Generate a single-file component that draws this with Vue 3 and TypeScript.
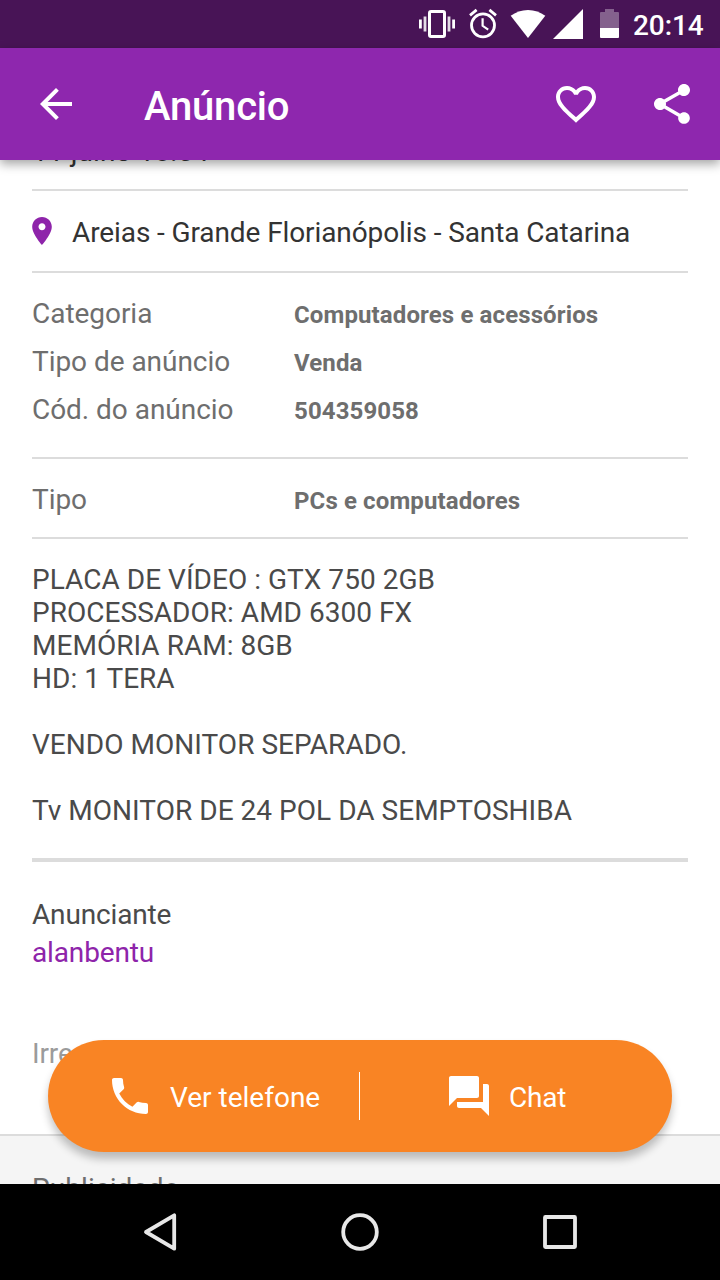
<script setup lang="ts">
interface Detail {
  label: string
  value: string
}

const details: Detail[] = [
  { label: 'Categoria', value: 'Computadores e acessórios' },
  { label: 'Tipo de anúncio', value: 'Venda' },
  { label: 'Cód. do anúncio', value: '504359058' },
]

const description: string = [
  'PLACA DE VÍDEO : GTX 750 2GB',
  'PROCESSADOR: AMD 6300 FX',
  'MEMÓRIA RAM: 8GB',
  'HD: 1 TERA',
  '',
  'VENDO MONITOR SEPARADO.',
  '',
  'Tv MONITOR DE 24 POL DA SEMPTOSHIBA',
].join('\n')
</script>

<template>
  <div class="screen">
    <div class="status-bar">
      <svg class="vibrate" width="36" height="48" viewBox="0 0 36 48">
        <rect x="10.5" y="11.5" width="15" height="25" rx="1.5" fill="none" stroke="#fff" stroke-width="3" />
        <path d="M1.4 19.5v9M34.6 19.5v9" stroke="#fff" stroke-width="2.8" />
        <path d="M6 16.5v15M30 16.5v15" stroke="#fff" stroke-opacity=".85" stroke-width="2.8" />
      </svg>
      <svg class="alarm" width="28" height="48" viewBox="0 0 28 48">
        <circle cx="14" cy="25.3" r="11.5" fill="none" stroke="#fff" stroke-width="2.8" />
        <path d="M13.6 18.2v7.6l5.6 3.9" fill="none" stroke="#fff" stroke-width="2.2" />
        <path d="M1 15.3l6.6-5.4M27 15.3l-6.6-5.4" stroke="#fff" stroke-width="2.8" />
      </svg>
      <svg class="wifi" width="36" height="48" viewBox="0 0 36 48">
        <path d="M18 38L.7 15.8C5.500 12 11.500 9.900 18 9.900s12.500 2.100 17.300 5.900z" fill="#fff" />
      </svg>
      <svg class="signal" width="30" height="48" viewBox="0 0 30 48">
        <path d="M0 39L30 9v30z" fill="#fff" />
      </svg>
      <svg class="battery" width="19" height="48" viewBox="0 0 19 48">
        <path d="M0 28V13q0-1 1-1h4V9h9v3h4q1 0 1 1v15z" fill="#fff" fill-opacity=".33" />
        <path d="M0 28h19v9q0 1-1 1H1q-1 0-1-1z" fill="#fff" />
      </svg>
      <span class="clock">20:14</span>
    </div>

    <header class="app-bar">
      <svg class="icon" viewBox="0 0 24 24">
        <path d="M20 11H7.830l5.590-5.590L12 4l-8 8 8 8 1.410-1.410L7.830 13H20z" />
      </svg>
      <h1 class="title">Anúncio</h1>
      <svg class="icon" viewBox="0 0 24 24">
        <path d="M16.5 3c-1.740 0-3.410.810-4.500 2.090C10.910 3.810 9.240 3 7.500 3 4.420 3 2 5.420 2 8.500c0 3.780 3.400 6.860 8.550 11.540L12 21.350l1.450-1.320C18.600 15.360 22 12.280 22 8.500 22 5.420 19.580 3 16.500 3zm-4.400 15.550l-.1.100-.1-.1C7.140 14.240 4 11.390 4 8.500 4 6.500 5.500 5 7.500 5c1.540 0 3.040.990 3.570 2.360h1.870C13.460 5.990 14.960 5 16.500 5c2 0 3.500 1.500 3.500 3.500 0 2.890-3.140 5.740-7.900 10.050z" />
      </svg>
      <svg class="icon share" viewBox="0 0 24 24">
        <path d="M18 16.080c-.76 0-1.440.300-1.960.770L8.910 12.700c.05-.23.090-.46.090-.7s-.04-.47-.09-.7l7.050-4.110c.54.500 1.250.810 2.040.810 1.660 0 3-1.340 3-3s-1.340-3-3-3-3 1.340-3 3c0 .240.040.470.090.700L8.040 9.810C7.500 9.310 6.790 9 6 9c-1.660 0-3 1.340-3 3s1.340 3 3 3c.79 0 1.500-.31 2.040-.81l7.120 4.160c-.05.210-.08.430-.08.650 0 1.610 1.310 2.920 2.920 2.920s2.920-1.310 2.920-2.920-1.310-2.920-2.920-2.920z" />
      </svg>
    </header>

    <main class="content">
      <div class="date">11 julho 18:54</div>

      <section class="location">
        <svg class="pin" viewBox="5 2 14 20">
          <path d="M12 2C8.130 2 5 5.130 5 9c0 5.250 7 13 7 13s7-7.750 7-13c0-3.870-3.130-7-7-7zm0 9.500c-1.380 0-2.500-1.120-2.500-2.500s1.120-2.500 2.500-2.500 2.500 1.120 2.500 2.500-1.120 2.500-2.500 2.500z" />
        </svg>
        <span>Areias - Grande Florianópolis - Santa Catarina</span>
      </section>

      <dl class="details">
        <div v-for="item in details" :key="item.label" class="row">
          <dt>{{ item.label }}</dt>
          <dd>{{ item.value }}</dd>
        </div>
      </dl>

      <dl class="details kind">
        <div class="row">
          <dt>Tipo</dt>
          <dd>PCs e computadores</dd>
        </div>
      </dl>

      <p class="description">{{ description }}</p>

      <section class="seller">
        <div>Anunciante</div>
        <div class="seller-name">alanbentu</div>
        <div class="report">Irregularidade</div>
      </section>

      <section class="ads">Publicidade</section>

      <div class="actions">
        <button class="action phone" type="button">
          <svg class="icon" viewBox="0 0 24 24">
            <path d="M6.620 10.790c1.440 2.830 3.760 5.140 6.590 6.590l2.200-2.200c.27-.27.670-.36 1.020-.24 1.120.370 2.330.570 3.570.570.550 0 1 .450 1 1V20c0 .550-.45 1-1 1-9.390 0-17-7.610-17-17 0-.55.450-1 1-1h3.500c.55 0 1 .450 1 1 0 1.250.200 2.450.570 3.570.110.350.030.740-.25 1.020l-2.200 2.200z" />
          </svg>
          <span>Ver telefone</span>
        </button>
        <i class="separator"></i>
        <button class="action chat" type="button">
          <svg class="icon" viewBox="0 0 24 24">
            <path d="M21 6h-2v9H6v2c0 .550.450 1 1 1h11l4 4V7c0-.55-.45-1-1-1zm-4 6V3c0-.55-.45-1-1-1H3c-.55 0-1 .450-1 1v14l4-4h10c.55 0 1-.45 1-1z" />
          </svg>
          <span>Chat</span>
        </button>
      </div>
    </main>

    <nav class="nav-bar">
      <svg viewBox="0 0 48 48"><path d="M10 24L38.200 7.300v33.400z" /></svg>
      <svg viewBox="0 0 48 48"><circle cx="24" cy="24" r="16.800" /></svg>
      <svg viewBox="0 0 48 48"><rect x="9" y="9" width="30" height="30" rx=".5" /></svg>
    </nav>
  </div>
</template>

<style>
body {
  margin: 0;
}
</style>

<style scoped>
.screen {
  display: flex;
  flex-direction: column;
  width: 720px;
  height: 1280px;
  overflow: hidden;
  background: #fff;
  color: #4a4a4a;
  font: 28px/33px Roboto, sans-serif;
}

.screen * {
  box-sizing: border-box;
}

svg {
  display: block;
  flex: none;
}

.status-bar {
  display: flex;
  flex: none;
  align-items: center;
  height: 48px;
  padding-left: 419px;
  background: #481456;
  color: #fff;
}

.alarm {
  margin-left: 14px;
}

.wifi {
  margin-left: 13px;
}

.signal {
  margin-left: 7px;
}

.battery {
  margin-left: 17px;
}

.clock {
  margin: 2px 0 0 14px;
  font-weight: 500;
  letter-spacing: -0.1px;
}

.app-bar {
  position: relative;
  z-index: 1;
  display: flex;
  flex: none;
  align-items: center;
  height: 112px;
  padding: 0 24px 0 32px;
  background: #8e27ae;
  color: #fff;
  box-shadow: 0 4px 10px rgba(0, 0, 0, 0.36);
}

.icon {
  width: 48px;
  height: 48px;
  fill: #fff;
}

.title {
  flex: 1;
  margin: 6px 0 0 64px;
  font-size: 40px;
  font-weight: 500;
  letter-spacing: -0.2px;
  line-height: 48px;
}

.share {
  margin-left: 48px;
}

.content {
  position: relative;
  flex: none;
  height: 1024px;
}

.date {
  display: flex;
  align-items: flex-end;
  height: 29px;
  padding-bottom: 21px;
  margin: 0 32px;
  color: #333;
  letter-spacing: 0.1px;
}

.location {
  display: flex;
  gap: 20px;
  height: 82px;
  margin: 0 32px;
  padding-top: 25px;
  border-top: 2px solid #dcdcdc;
  color: #333;
  letter-spacing: -0.1px;
}

.pin {
  width: 20px;
  height: 28px;
  margin-top: 1px;
  fill: #8e24aa;
}

.details {
  height: 186px;
  margin: 0 32px;
  padding-top: 24px;
  border-top: 2px solid #dcdcdc;
  color: #6e6e6e;
}

.kind {
  height: 80px;
}

.row {
  display: grid;
  grid-template-columns: 262px 1fr;
  align-items: baseline;
  height: 48px;
}

dt {
  letter-spacing: -0.04px;
}

dd {
  margin: 0;
  font-size: 24px;
  font-weight: 700;
  letter-spacing: 0.12px;
}

.description {
  height: 321px;
  margin: 0 32px;
  padding-top: 24px;
  border-top: 2px solid #dcdcdc;
  letter-spacing: 0.03px;
  white-space: pre-line;
}

.seller {
  height: 276px;
  margin: 0 32px;
  padding-top: 36px;
  border-top: 4px solid #dcdcdc;
  letter-spacing: -0.15px;
}

.seller-name {
  margin-top: 5px;
  color: #8e24aa;
}

.report {
  margin-top: 68px;
  color: #9b9b9b;
}

.ads {
  height: 50px;
  padding: 36px 32px 0;
  overflow: hidden;
  border-top: 2px solid #dcdcdc;
  background: #f5f5f5;
  color: #6e6e6e;
  letter-spacing: 0.1px;
}

.actions {
  position: absolute;
  right: 48px;
  bottom: 32px;
  left: 48px;
  display: flex;
  align-items: center;
  height: 112px;
  border-radius: 56px;
  background: #f98424;
  box-shadow: 0 7px 8px rgba(0, 0, 0, 0.24);
}

.action {
  display: flex;
  align-items: center;
  height: 112px;
  padding: 0;
  border: 0;
  background: none;
  color: #fff;
  font: inherit;
}

.phone {
  gap: 16px;
  width: 311px;
  padding-left: 58px;
}

.chat {
  gap: 16px;
  padding-left: 85px;
  letter-spacing: -0.2px;
}

.action span {
  margin-top: 2px;
}

.separator {
  width: 1px;
  height: 48px;
  background: #fff;
}

.nav-bar {
  position: relative;
  display: flex;
  flex: none;
  align-items: center;
  justify-content: center;
  gap: 152px;
  height: 96px;
  background: #000;
}

.nav-bar svg {
  width: 48px;
  height: 48px;
  fill: none;
  stroke: #e8e8e8;
  stroke-width: 3.8;
  stroke-linejoin: round;
}
</style>
